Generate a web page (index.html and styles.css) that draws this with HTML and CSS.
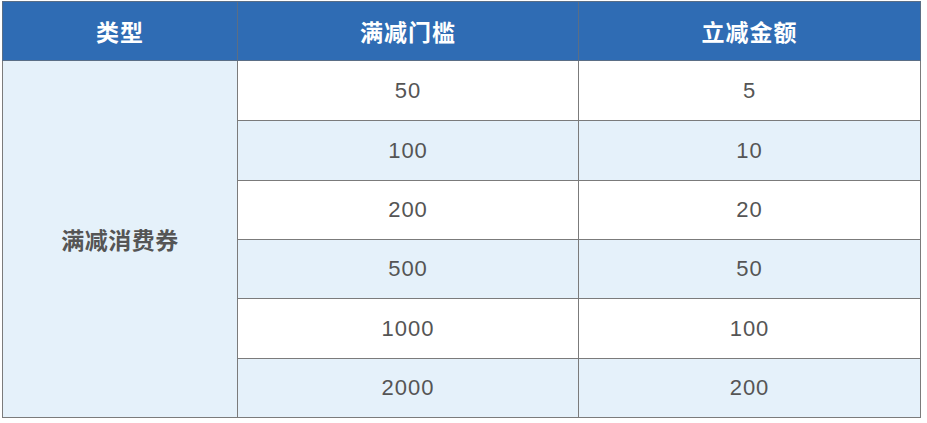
FILE: index.html
```html
<!DOCTYPE html>
<html lang="zh">
<head>
<meta charset="utf-8">
<link rel="stylesheet" href="styles.css">
</head>
<body>
<table class="coupon-table">
  <colgroup>
    <col class="c1"><col class="c2"><col class="c3">
  </colgroup>
  <thead>
    <tr class="head-row"><th>类型</th><th>满减门槛</th><th>立减金额</th></tr>
  </thead>
  <tbody>
    <tr class="r60"><td class="type" rowspan="6">满减消费券</td><td>50</td><td>5</td></tr>
    <tr class="r60 alt"><td>100</td><td>10</td></tr>
    <tr class="r59"><td>200</td><td>20</td></tr>
    <tr class="r59 alt"><td>500</td><td>50</td></tr>
    <tr class="r60"><td>1000</td><td>100</td></tr>
    <tr class="r59 alt"><td>2000</td><td>200</td></tr>
  </tbody>
</table>
</body>
</html>
```
FILE: styles.css
```css
html, body {
  margin: 0;
  background: #ffffff;
}
body {
  padding: 1px 0 0 2px;
  font-family: "Liberation Sans", Arial, "Noto Sans CJK SC", sans-serif;
}
.coupon-table {
  border-collapse: collapse;
  width: 918px;
  table-layout: fixed;
  border: 1px solid #7b7b7b;
}
.c1 { width: 235px; }
.c2 { width: 341px; }
.c3 { width: 342px; }
.coupon-table th,
.coupon-table td {
  border: 1px solid #7b7b7b;
  text-align: center;
  vertical-align: middle;
  padding: 0;
}
.head-row { height: 59px; }
.coupon-table th {
  background: #2f6cb4;
  color: #ffffff;
  font-family: "Noto Sans CJK SC", sans-serif;
  font-weight: 700;
  font-size: 23px;
  letter-spacing: 1px;
  border-color: #5a6e86;
}
.coupon-table td {
  color: #555555;
  font-size: 22px;
  letter-spacing: 1px;
  background: #ffffff;
}
.r60 { height: 60px; }
.r59 { height: 59px; }
.coupon-table tr.alt td { background: #e5f1fa; }
.coupon-table td.type {
  background: #e5f1fa;
  font-family: "Noto Sans CJK SC", sans-serif;
  font-weight: 700;
  font-size: 23px;
  letter-spacing: 0.5px;
  color: #555555;
}
```
